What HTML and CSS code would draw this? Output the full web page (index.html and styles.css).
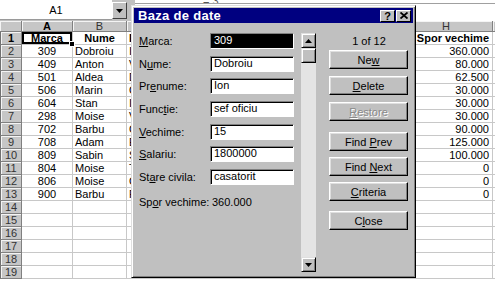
FILE: index.html
```html
<!DOCTYPE html>
<html lang="ro">

<head>
    <meta charset="UTF-8">
    <title>Baza de date</title>
    <link rel="stylesheet" href="styles.css">
</head>

<body>
    <div class="excel">
        <!-- Formula bar -->
        <div class="formula-bar">
            <div class="name-box">A1</div>
            <div class="name-drop">
                <svg width="7" height="4" viewBox="0 0 7 4"><polygon points="0,0 7,0 3.5,4" fill="#000"/></svg>
            </div>
            <div class="formula-gap"></div>
            <div class="formula-field">
                <div class="formula-edit"><span>= 3.</span></div>
            </div>
        </div>

        <!-- Sheet -->
        <table class="sheet">
            <colgroup>
                <col class="c-rowhead">
                <col class="c-a">
                <col class="c-b">
                <col class="c-c">
                <col class="c-d">
                <col class="c-e">
                <col class="c-f">
                <col class="c-g">
                <col class="c-h">
                <col>
            </colgroup>
            <tr class="col-heads">
                <th class="corner"></th>
                <th class="active">A</th>
                <th>B</th>
                <th>C</th>
                <th>D</th>
                <th>E</th>
                <th>F</th>
                <th>G</th>
                <th>H</th>
                <th></th>
            </tr>
            <tr>
                <th class="active">1</th>
                <td class="bold center selected">Marca</td>
                <td class="bold center">Nume</td>
                <td class="bold">Prenume</td>
                <td class="bold">Functie</td>
                <td class="bold">Vechime</td>
                <td class="bold">Salariu</td>
                <td class="bold">Stare civila</td>
                <td class="bold num">Spor vechime</td>
                <td></td>
            </tr>
            <tr><th>2</th><td class="center">309</td><td>Dobroiu</td><td>Ion</td><td></td><td></td><td></td><td></td><td class="num">360.000</td><td></td></tr>
            <tr><th>3</th><td class="center">409</td><td>Anton</td><td>Vasile</td><td></td><td></td><td></td><td></td><td class="num">80.000</td><td></td></tr>
            <tr><th>4</th><td class="center">501</td><td>Aldea</td><td>Dan</td><td></td><td></td><td></td><td></td><td class="num">62.500</td><td></td></tr>
            <tr><th>5</th><td class="center">506</td><td>Marin</td><td>Costel</td><td></td><td></td><td></td><td></td><td class="num">30.000</td><td></td></tr>
            <tr><th>6</th><td class="center">604</td><td>Stan</td><td>Ilie</td><td></td><td></td><td></td><td></td><td class="num">30.000</td><td></td></tr>
            <tr><th>7</th><td class="center">298</td><td>Moise</td><td>Victor</td><td></td><td></td><td></td><td></td><td class="num">30.000</td><td></td></tr>
            <tr><th>8</th><td class="center">702</td><td>Barbu</td><td>Cornel</td><td></td><td></td><td></td><td></td><td class="num">90.000</td><td></td></tr>
            <tr><th>9</th><td class="center">708</td><td>Adam</td><td>Elena</td><td></td><td></td><td></td><td></td><td class="num">125.000</td><td></td></tr>
            <tr><th>10</th><td class="center">809</td><td>Sabin</td><td>Sorin</td><td></td><td></td><td></td><td></td><td class="num">100.000</td><td></td></tr>
            <tr><th>11</th><td class="center">804</td><td>Moise</td><td>Toma</td><td></td><td></td><td></td><td></td><td class="num">0</td><td></td></tr>
            <tr><th>12</th><td class="center">806</td><td>Moise</td><td>Carmen</td><td></td><td></td><td></td><td></td><td class="num">0</td><td></td></tr>
            <tr><th>13</th><td class="center">900</td><td>Barbu</td><td>Florin</td><td></td><td></td><td></td><td></td><td class="num">0</td><td></td></tr>
            <tr><th>14</th><td></td><td></td><td></td><td></td><td></td><td></td><td></td><td></td><td></td></tr>
            <tr><th>15</th><td></td><td></td><td></td><td></td><td></td><td></td><td></td><td></td><td></td></tr>
            <tr><th>16</th><td></td><td></td><td></td><td></td><td></td><td></td><td></td><td></td><td></td></tr>
            <tr><th>17</th><td></td><td></td><td></td><td></td><td></td><td></td><td></td><td></td><td></td></tr>
            <tr><th>18</th><td></td><td></td><td></td><td></td><td></td><td></td><td></td><td></td><td></td></tr>
            <tr><th>19</th><td></td><td></td><td></td><td></td><td></td><td></td><td></td><td></td><td></td></tr>
        </table>

        <!-- Data form dialog -->
        <div class="dialog">
            <div class="title-bar">
                <span class="title">Baza de date</span>
                <div class="title-btns">
                    <div class="title-btn">?</div>
                    <div class="title-btn">
                        <svg width="8" height="7" viewBox="0 0 8 7"><path d="M0.5 0.5 L7.5 6.5 M7.5 0.5 L0.5 6.5" stroke="#000" stroke-width="1.8"/></svg>
                    </div>
                </div>
            </div>

            <div class="dialog-body">
                <div class="form">
                    <label><u>M</u>arca:</label>
                    <div class="field highlighted">309</div>
                    <label>N<u>u</u>me:</label>
                    <div class="field">Dobroiu</div>
                    <label>Pr<u>e</u>nume:</label>
                    <div class="field">Ion</div>
                    <label>Func<u>t</u>ie:</label>
                    <div class="field">sef oficiu</div>
                    <label><u>V</u>echime:</label>
                    <div class="field">15</div>
                    <label><u>S</u>alariu:</label>
                    <div class="field">1800000</div>
                    <label>St<u>a</u>re civila:</label>
                    <div class="field">casatorit</div>
                    <label class="spor">Sp<u>o</u>r vechime:</label>
                    <div class="spor-value">360.000</div>
                </div>

                <div class="scrollbar">
                    <div class="scroll-btn">
                        <svg width="7" height="4" viewBox="0 0 7 4"><polygon points="3.5,0 7,4 0,4" fill="#000"/></svg>
                    </div>
                    <div class="scroll-thumb"></div>
                    <div class="scroll-track"></div>
                    <div class="scroll-btn">
                        <svg width="7" height="4" viewBox="0 0 7 4"><polygon points="0,0 7,0 3.5,4" fill="#000"/></svg>
                    </div>
                </div>

                <div class="actions">
                    <div class="counter">1 of 12</div>
                    <button class="btn">Ne<u>w</u></button>
                    <button class="btn"><u>D</u>elete</button>
                    <button class="btn disabled"><u>R</u>estore</button>
                    <button class="btn group">Find <u>P</u>rev</button>
                    <button class="btn">Find <u>N</u>ext</button>
                    <button class="btn"><u>C</u>riteria</button>
                    <button class="btn group">C<u>l</u>ose</button>
                </div>
            </div>
        </div>
    </div>
</body>
</html>
```

FILE: styles.css
```css
body {
    margin: 0;
    padding: 0;
    background-color: #FFFFFF;
    font-family: 'Liberation Sans', Arial, sans-serif;
    font-size: 11px;
    color: #000000;
    overflow: hidden;
}

.excel {
    position: relative;
    width: 495px;
    height: 281px;
    overflow: hidden;
}

/* Formula bar */
.formula-bar {
    display: flex;
    height: 21px;
    background-color: #C0C0C0;
}

.name-box {
    width: 112px;
    height: 20px;
    background-color: #FFFFFF;
    border-bottom: 1px solid #9A9A9A;
    text-align: center;
    line-height: 21px;
    box-sizing: border-box;
}

.name-drop {
    width: 15px;
    height: 17px;
    margin-top: 2px;
    display: flex;
    align-items: center;
    justify-content: center;
    box-sizing: border-box;
    border: 1px solid;
    border-color: #FFFFFF #404040 #404040 #FFFFFF;
    background-color: #C0C0C0;
}

.formula-gap {
    width: 8px;
}

.formula-field {
    flex: 1;
    background-color: #FFFFFF;
}

.formula-edit {
    height: 3px;
    border-bottom: 1px solid #A0A0A0;
    overflow: hidden;
    padding-left: 68px;
    line-height: 3px;
    color: #555;
}

/* Sheet */
.sheet {
    table-layout: fixed;
    border-collapse: separate;
    border-spacing: 0;
    width: 510px;
}

.c-rowhead { width: 22px; }
.c-a { width: 51px; }
.c-b { width: 54px; }
.c-c { width: 64px; }
.c-d { width: 56px; }
.c-e { width: 52px; }
.c-f { width: 56px; }
.c-g { width: 45px; }
.c-h { width: 93px; }

.sheet tr {
    height: 13px;
}

.sheet tr.col-heads {
    height: 11px;
}

.sheet th {
    padding: 0;
    background-color: #C6C6C6;
    font-weight: normal;
    color: #333;
    line-height: 10px;
    text-align: center;
    border-right: 1px solid #808080;
    border-bottom: 1px solid #808080;
    box-shadow: inset 1px 1px #F4F4F4;
    white-space: nowrap;
    overflow: hidden;
}

.sheet tr:not(.col-heads) th {
    line-height: 12px;
    border-left: 1px solid #707070;
}

.sheet th.active {
    font-weight: bold;
    color: #000;
}

.sheet td {
    padding: 0 2px;
    line-height: 12px;
    border-right: 1px solid #C8C8C8;
    border-bottom: 1px solid #C8C8C8;
    white-space: nowrap;
    overflow: hidden;
}

.sheet td.center {
    text-align: center;
}

.sheet td.num {
    text-align: right;
    padding-right: 3px;
}

.sheet td.bold {
    font-weight: bold;
}

.sheet td.selected {
    position: relative;
    overflow: visible;
    box-shadow: inset 0 0 0 2px #000;
}

.sheet td.selected::after {
    content: "";
    position: absolute;
    right: -3px;
    bottom: -3px;
    width: 4px;
    height: 4px;
    background-color: #000;
    border: 1px solid #FFF;
}

/* Dialog */
.dialog {
    position: absolute;
    left: 131px;
    top: 5px;
    width: 285px;
    height: 273px;
    box-sizing: border-box;
    padding: 2px;
    background-color: #C0C0C0;
    border: 1px solid;
    border-color: #DFDFDF #000000 #000000 #DFDFDF;
    box-shadow: inset 1px 1px #FFFFFF, inset -1px -1px #808080;
}

.title-bar {
    display: flex;
    align-items: center;
    justify-content: space-between;
    height: 15px;
    background-color: #000080;
    padding: 0 2px 0 4px;
}

.title {
    color: #FFFFFF;
    font-weight: bold;
    font-size: 13px;
    letter-spacing: 0.3px;
}

.title-btns {
    display: flex;
    gap: 1px;
}

.title-btn {
    width: 15px;
    height: 12px;
    box-sizing: border-box;
    display: flex;
    align-items: center;
    justify-content: center;
    background-color: #C0C0C0;
    border: 1px solid;
    border-color: #FFFFFF #000000 #000000 #FFFFFF;
    font-weight: bold;
    font-size: 11px;
    line-height: 10px;
}

.dialog-body {
    display: flex;
    padding: 10px 0 0 5px;
}

.form {
    display: grid;
    grid-template-columns: 71px 84px;
    grid-auto-rows: 16px;
    row-gap: 6.67px;
    align-items: center;
    align-self: flex-start;
}

.form label {
    white-space: nowrap;
}

.field {
    height: 16px;
    box-sizing: border-box;
    padding-left: 3px;
    line-height: 13px;
    background-color: #FFFFFF;
    border: 1px solid;
    border-color: #808080 #FFFFFF #FFFFFF #808080;
    box-shadow: inset 1px 1px #000000;
    white-space: nowrap;
    overflow: hidden;
}

.field.highlighted {
    background-color: #000000;
    color: #FFFFFF;
}

.form .spor,
.spor-value {
    grid-row: 8;
    transform: translateY(2px);
}

.spor-value {
    padding-left: 2px;
}

/* Scrollbar */
.scrollbar {
    display: flex;
    flex-direction: column;
    width: 15px;
    height: 239px;
    margin-left: 7px;
}

.scroll-btn,
.scroll-thumb {
    height: 15px;
    box-sizing: border-box;
    background-color: #C0C0C0;
    border: 1px solid;
    border-color: #DFDFDF #000000 #000000 #DFDFDF;
    box-shadow: inset 1px 1px #FFFFFF, inset -1px -1px #808080;
    display: flex;
    align-items: center;
    justify-content: center;
}

.scroll-track {
    flex: 1;
    background-color: #E4E4E4;
}

/* Buttons */
.actions {
    display: flex;
    flex-direction: column;
    width: 79px;
    margin-left: 13px;
}

.counter {
    height: 17px;
    line-height: 17px;
    text-align: center;
    padding-left: 1px;
}

.btn {
    height: 19px;
    margin-bottom: 7px;
    padding: 0;
    font-family: 'Liberation Sans', Arial, sans-serif;
    font-size: 11px;
    color: #000;
    background-color: #C0C0C0;
    border: 1px solid;
    border-color: #FFFFFF #000000 #000000 #FFFFFF;
    box-shadow: inset -1px -1px #808080, inset 1px 1px #DFDFDF;
}

.btn.group {
    margin-top: 4px;
}

.btn.disabled {
    color: #8A8A8A;
    text-shadow: 1px 1px #FFFFFF;
}

.btn:nth-child(5),
.btn:nth-child(6),
.btn:nth-child(7) {
    margin-bottom: 6px;
}
```
